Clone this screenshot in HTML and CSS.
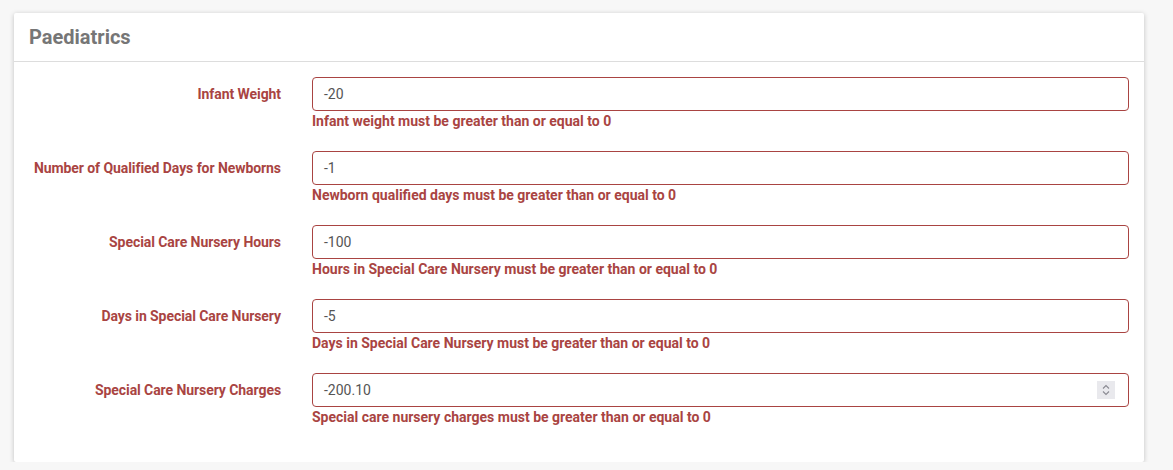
FILE: index.html
```html
<!DOCTYPE html>
<html>
<head>
<meta charset="utf-8">
<link rel="stylesheet" href="styles.css">
</head>
<body>
<div class="card">
  <div class="card-header"><h2 class="title">Paediatrics</h2></div>
  <div class="card-body">
    <div class="form-row">
      <label class="label">Infant Weight</label>
      <div class="field">
        <div class="input">-20</div>
        <div class="error">Infant weight must be greater than or equal to 0</div>
      </div>
    </div>
    <div class="form-row">
      <label class="label">Number of Qualified Days for Newborns</label>
      <div class="field">
        <div class="input">-1</div>
        <div class="error">Newborn qualified days must be greater than or equal to 0</div>
      </div>
    </div>
    <div class="form-row">
      <label class="label">Special Care Nursery Hours</label>
      <div class="field">
        <div class="input">-100</div>
        <div class="error">Hours in Special Care Nursery must be greater than or equal to 0</div>
      </div>
    </div>
    <div class="form-row">
      <label class="label">Days in Special Care Nursery</label>
      <div class="field">
        <div class="input">-5</div>
        <div class="error">Days in Special Care Nursery must be greater than or equal to 0</div>
      </div>
    </div>
    <div class="form-row">
      <label class="label">Special Care Nursery Charges</label>
      <div class="field">
        <div class="input input-number">-200.10
          <span class="spinner">
            <svg width="18" height="18" viewBox="0 0 18 18"><path d="M6 7.5 L9 4.5 L12 7.5" fill="none" stroke="#8a8a92" stroke-width="1.1"/><path d="M6 10.5 L9 13.5 L12 10.5" fill="none" stroke="#8a8a92" stroke-width="1.1"/></svg>
          </span>
        </div>
        <div class="error">Special care nursery charges must be greater than or equal to 0</div>
      </div>
    </div>
  </div>
</div>
</body>
</html>
```

FILE: styles.css
```css
html, body {
  margin: 0;
  padding: 0;
}
body {
  background: #f7f7f7;
  font-family: Roboto, "Liberation Sans", Arial, sans-serif;
  font-size: 14px;
  line-height: 20px;
  padding: 13px 29px 0 14px;
}
.card {
  background: #fff;
  width: 1130px;
  border-radius: 2px;
  box-shadow: 0 1px 5px rgba(0, 0, 0, 0.22);
}
.card-header {
  height: 49px;
  border-bottom: 1px solid #dddddd;
  box-sizing: border-box;
  padding: 0 15px;
  display: flex;
  align-items: center;
}
.title {
  margin: 0;
  font-size: 20px;
  font-weight: 700;
  color: #767676;
  line-height: 28px;
}
.card-body {
  padding: 15px 15px 15px 15px;
}
.form-row {
  display: grid;
  grid-template-columns: 252px 817px;
  column-gap: 31px;
  margin-bottom: 20px;
}
.label {
  text-align: right;
  font-weight: 700;
  color: #a94442;
  padding-top: 7px;
  letter-spacing: -0.07px;
}
.field {
  display: flex;
  flex-direction: column;
}
.input {
  position: relative;
  height: 34px;
  box-sizing: border-box;
  border: 1px solid #a94442;
  border-radius: 4px;
  padding: 6px 11px;
  color: #555;
  font-size: 14px;
  line-height: 20px;
}
.error {
  color: #a94442;
  font-weight: 700;
}
.spinner {
  position: absolute;
  right: 13px;
  top: 7px;
  width: 18px;
  height: 18px;
  background: #e9e9ed;
  display: block;
}
.spinner svg {
  display: block;
}
```
